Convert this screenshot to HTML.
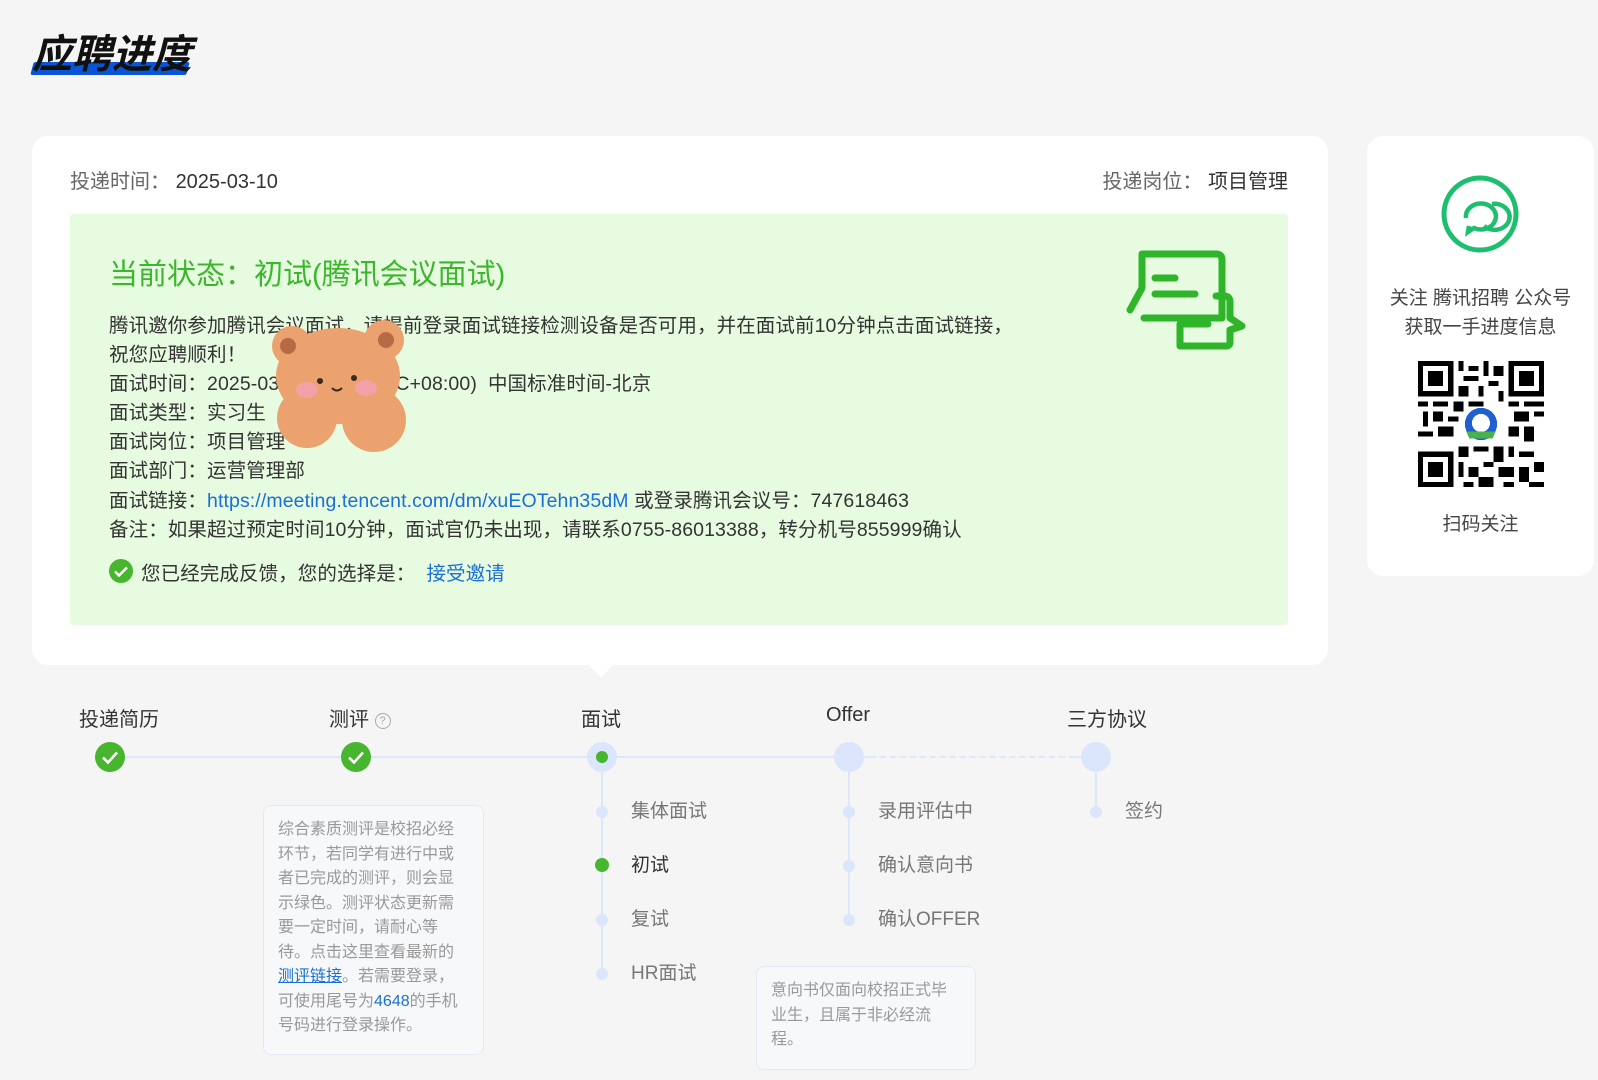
<!DOCTYPE html>
<html><head><meta charset="utf-8"><style>
*{margin:0;padding:0;box-sizing:border-box}
body{width:1598px;height:1080px;background:#f5f5f5;font-family:"Liberation Sans","Noto Sans CJK SC",sans-serif;position:relative;overflow:hidden;color:#333}
.a{position:absolute;white-space:nowrap}
.title{left:32px;top:22px;font-size:40px;font-weight:bold;font-style:italic;color:#111;letter-spacing:0px;z-index:2}
.bar{left:32px;top:62px;width:156px;height:13px;background:#0a55d6;transform:skewX(-15deg);border-radius:2px}
.card{left:32px;top:136px;width:1296px;height:529px;background:#fff;border-radius:16px}
.green{left:70px;top:214px;width:1218px;height:411px;background:#e6fbe0;border-radius:4px}
.lbl{font-size:20px;color:#666}
.val{color:#333}
.st{left:109px;top:251px;font-size:29px;color:#3cb72c}
.body{left:109px;font-size:19.5px;color:#333;letter-spacing:0.1px}
.blue{color:#1a6fd6}
.rc{left:1367px;top:136px;width:227px;height:440px;background:#fff;border-radius:16px}
.step{font-size:20px;color:#333;top:703px}
.line{height:2px;background:#dce7fb;top:756px}
.chk{width:30px;height:30px;border-radius:50%;background:#48b52e;top:742px}
.pc{width:30px;height:30px;border-radius:50%;background:#dbe6fd;top:742px}
.sub{font-size:19px;color:#777}
.dot{width:12px;height:12px;border-radius:50%;background:#dbe6fd}
.tip{border:1px solid #e3eaf6;border-radius:8px;background:#f7f8fa;font-size:16px;color:#999;line-height:24.5px;white-space:normal;padding:12px 14px}
</style></head><body>
<div class="a bar"></div>
<div class="a title">应聘进度</div>

<div class="a card"></div>
<div class="a" style="left:586px;top:662px;width:0;height:0;border-left:15px solid transparent;border-right:15px solid transparent;border-top:16px solid #fff"></div>
<div class="a lbl" style="left:70px;top:165px">投递时间：&nbsp;<span class="val">2025-03-10</span></div>
<div class="a lbl" style="right:310px;top:165px">投递岗位：&nbsp;<span class="val">项目管理</span></div>
<div class="a green"></div>
<div class="a st">当前状态：初试(腾讯会议面试)</div>
<div class="a body" style="top:309px">腾讯邀你参加腾讯会议面试，请提前登录面试链接检测设备是否可用，并在面试前10分钟点击面试链接，</div>
<div class="a body" style="top:338px">祝您应聘顺利！</div>
<div class="a body" style="top:367px">面试时间：2025-03-12 14:00(UTC+08:00)&nbsp; 中国标准时间-北京</div>
<div class="a body" style="top:396px">面试类型：实习生</div>
<div class="a body" style="top:425px">面试岗位：项目管理</div>
<div class="a body" style="top:454px">面试部门：运营管理部</div>
<div class="a body" style="top:484px">面试链接：<span class="blue">https://meeting.tencent.com/dm/xuEOTehn35dM</span> 或登录腾讯会议号：747618463</div>
<div class="a body" style="top:513px">备注：如果超过预定时间10分钟，面试官仍未出现，请联系0755-86013388，转分机号855999确认</div>
<div class="a" style="left:109px;top:559px;width:24px;height:24px;border-radius:50%;background:#48b52e"></div>
<svg class="a" style="left:109px;top:559px" width="24" height="24"><path d="M6 12.5l4 4 8-8" stroke="#fff" stroke-width="2.4" fill="none"/></svg>
<div class="a body" style="left:141px;top:557px">您已经完成反馈，您的选择是：&nbsp; <span class="blue">接受邀请</span></div>

<svg class="a" style="left:262px;top:318px" width="152" height="136" viewBox="0 0 152 136">
<g fill="#eba26e">
<circle cx="30" cy="28" r="20"/><circle cx="122" cy="22" r="20"/>
<ellipse cx="76" cy="58" rx="62" ry="48"/>
<circle cx="45" cy="100" r="30"/><circle cx="112" cy="102" r="32"/>
</g>
<circle cx="26" cy="28" r="8" fill="#b86a45"/><circle cx="124" cy="22" r="8" fill="#b86a45"/>
<circle cx="58" cy="63" r="3" fill="#3a2a20"/><circle cx="92" cy="60" r="3" fill="#3a2a20"/>
<path d="M70 70q5 5 10 0" stroke="#3a2a20" stroke-width="2" fill="none"/>
<ellipse cx="45" cy="72" rx="11" ry="8" fill="#f3a0a8"/><ellipse cx="104" cy="70" rx="11" ry="8" fill="#f3a0a8"/>
</svg>

<svg class="a" style="left:1120px;top:248px" width="135" height="110" viewBox="0 0 135 110" fill="none" stroke="#2fb52a" stroke-width="7" stroke-linecap="round" stroke-linejoin="round">
<path d="M10 62L22 40V6h74q6 0 6 6v58H24"/>
<path d="M35 30h20M35 46h40"/>
<path d="M60 76v22h46q4 0 4-4V82l12-4-12-8V54q0-6-6-6h-8"/>
<path d="M62 76h26"/>
</svg>

<div class="a rc"></div>
<svg class="a" style="left:1440px;top:174px" width="80" height="80" viewBox="0 0 80 80" fill="none" stroke="#1dbe6e" stroke-width="5">
<circle cx="40" cy="40" r="36"/>
<path d="M26 44a15 13 0 1 1 8 10l-6 4 1-6" stroke-width="4.5"/>
<path d="M52 30a15 13 0 1 1-8 22" stroke-width="4.5"/>
</svg>
<div class="a" style="left:1367px;width:227px;top:284px;text-align:center;font-size:19px;color:#444;line-height:29px">关注 腾讯招聘 公众号<br>获取一手进度信息</div>
<svg class="a" style="left:1418px;top:361px" width="126" height="126" viewBox="0 0 25 25" shape-rendering="crispEdges">
<rect width="25" height="25" fill="#fff"/>
<g fill="#000"><path d="M0 0h7v7H0zM18 0h7v7h-7zM0 18h7v7H0z"/></g>
<g fill="#fff"><path d="M1 1h5v5H1zM19 1h5v5h-5zM1 19h5v5H1z"/></g>
<g fill="#000"><path d="M2 2h3v3H2zM20 2h3v3h-3zM2 20h3v3H2z"/>
<path d="M8 0h1v2H8zM10 1h2v1h-2zM13 0h1v3h-1zM15 1h2v2h-2zM9 3h3v1H9zM8 5h2v2H8zM12 5h1v2h-1zM14 4h2v1h-2zM16 6h1v2h-1zM0 8h2v1H0zM3 8h3v1H3zM7 8h2v2H7zM10 8h3v1h-3zM18 8h2v1h-2zM21 8h4v1h-4zM1 10h1v3H1zM3 10h2v2H3zM6 11h2v1H6zM19 10h3v2h-3zM23 10h2v1h-2zM0 14h3v1H0zM4 13h3v2H4zM18 13h2v2h-2zM21 13h2v3h-2zM8 17h2v2H8zM11 17h3v1h-3zM15 17h2v3h-2zM18 17h1v2h-1zM20 18h3v1h-3zM8 20h1v3H8zM10 21h2v2h-2zM13 20h2v1h-2zM16 21h3v2h-3zM20 21h2v3h-2zM23 20h2v2h-2zM12 23h3v2h-3zM9 24h2v1H9zM17 24h2v1h-2zM22 24h3v1h-3z"/></g>
<circle cx="12.5" cy="12.5" r="3.2" fill="#1f5fd0"/><circle cx="12.5" cy="12.3" r="1.8" fill="#fff"/>
<path d="M9.6 14h5.8l-0.6 1.4h-4.6z" fill="#49b24a"/>
</svg>
<div class="a" style="left:1367px;width:227px;top:509px;text-align:center;font-size:19px;color:#444">扫码关注</div>

<div class="a line" style="left:125px;width:960px"></div>
<div class="a" style="left:870px;top:756px;width:205px;border-top:2px dashed #dce7fb;background:#f5f5f5;height:2px"></div>
<div class="a step" style="left:79px">投递简历</div>
<div class="a step" style="left:329px">测评 <span style="display:inline-block;width:16px;height:16px;border:1px solid #aaa;border-radius:50%;font-size:11px;color:#aaa;text-align:center;line-height:15px;vertical-align:middle">?</span></div>
<div class="a step" style="left:581px">面试</div>
<div class="a step" style="left:826px;top:704px">Offer</div>
<div class="a step" style="left:1067px">三方协议</div>
<div class="a chk" style="left:95px"></div><div class="a chk" style="left:341px"></div>
<svg class="a" style="left:95px;top:742px" width="30" height="30"><path d="M8 15.5l5 5 9-10" stroke="#fff" stroke-width="2.6" fill="none"/></svg>
<svg class="a" style="left:341px;top:742px" width="30" height="30"><path d="M8 15.5l5 5 9-10" stroke="#fff" stroke-width="2.6" fill="none"/></svg>
<div class="a pc" style="left:587px"></div>
<div class="a" style="left:596px;top:751px;width:12px;height:12px;border-radius:50%;background:#48b52e"></div>
<div class="a pc" style="left:834px"></div>
<div class="a pc" style="left:1081px"></div>
<div class="a" style="left:601px;top:772px;width:2px;height:200px;background:#dce7fb"></div>
<div class="a" style="left:848px;top:772px;width:2px;height:146px;background:#dce7fb"></div>
<div class="a" style="left:1095px;top:772px;width:2px;height:40px;background:#dce7fb"></div>
<div class="a dot" style="left:596px;top:806px"></div><div class="a sub" style="left:631px;top:796px">集体面试</div>
<div class="a" style="left:595px;top:858px;width:14px;height:14px;border-radius:50%;background:#48b52e"></div><div class="a sub" style="left:631px;top:850px;color:#333">初试</div>
<div class="a dot" style="left:596px;top:914px"></div><div class="a sub" style="left:631px;top:904px">复试</div>
<div class="a dot" style="left:596px;top:968px"></div><div class="a sub" style="left:631px;top:958px">HR面试</div>
<div class="a dot" style="left:843px;top:806px"></div><div class="a sub" style="left:878px;top:796px">录用评估中</div>
<div class="a dot" style="left:843px;top:860px"></div><div class="a sub" style="left:878px;top:850px">确认意向书</div>
<div class="a dot" style="left:843px;top:914px"></div><div class="a sub" style="left:878px;top:904px">确认OFFER</div>
<div class="a dot" style="left:1090px;top:806px"></div><div class="a sub" style="left:1125px;top:796px">签约</div>

<div class="a tip" style="left:263px;top:805px;width:221px;height:250px">综合素质测评是校招必经环节，若同学有进行中或者已完成的测评，则会显示绿色。测评状态更新需要一定时间，请耐心等待。点击这里查看最新的<span style="color:#1a6fd6;text-decoration:underline">测评链接</span>。若需要登录，可使用尾号为<span style="color:#1a6fd6">4648</span>的手机号码进行登录操作。</div>
<div class="a tip" style="left:756px;top:966px;width:220px;height:104px">意向书仅面向校招正式毕业生，且属于非必经流程。</div>
</body></html>
